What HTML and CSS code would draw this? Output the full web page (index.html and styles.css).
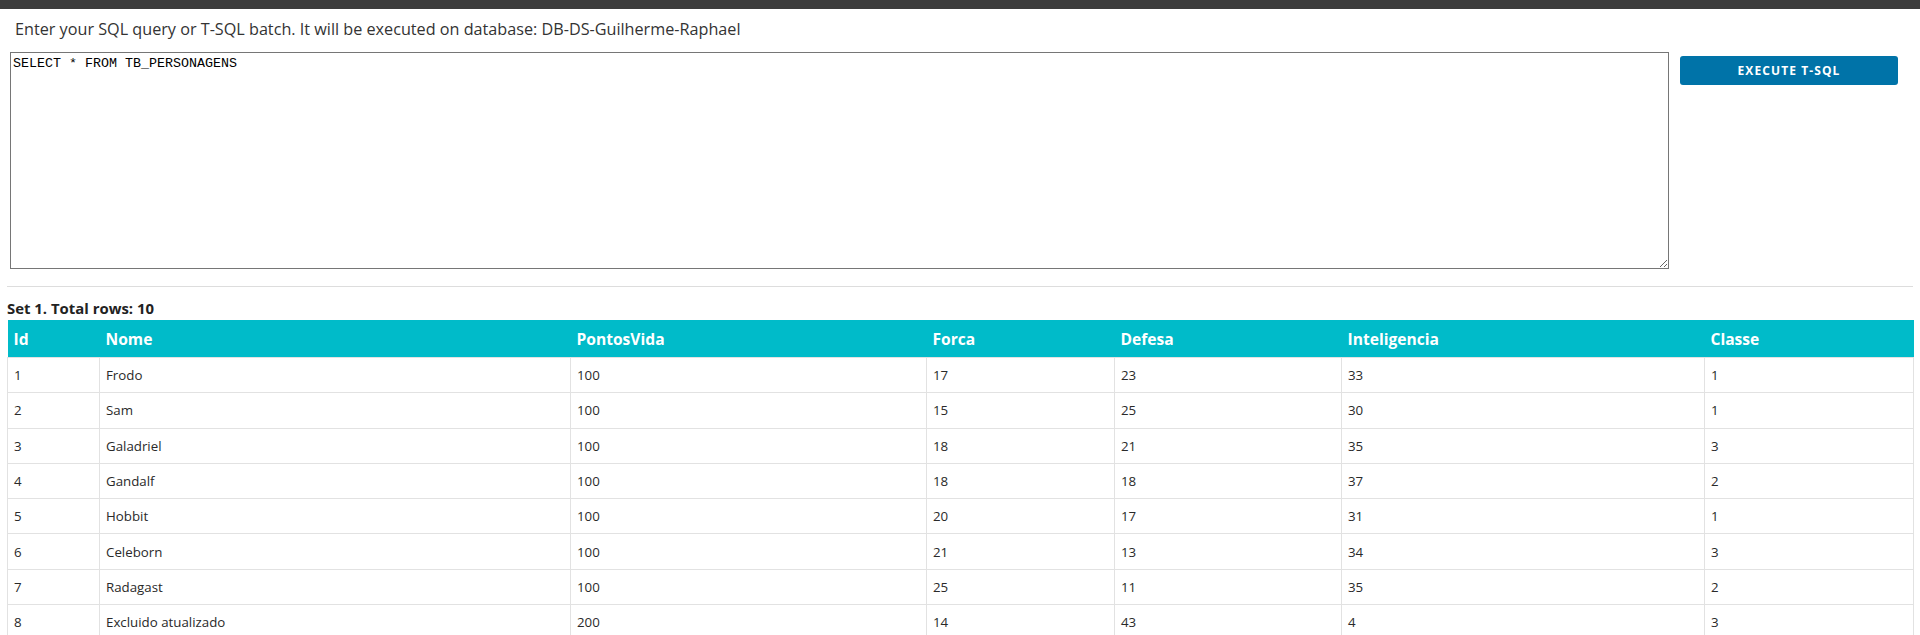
FILE: index.html
```html
<!DOCTYPE html>
<html lang="en">
<head>
<meta charset="utf-8">
<title>Query</title>
<link rel="stylesheet" href="styles.css">
</head>
<body>
<div class="topbar"></div>
<main class="page">
  <p class="intro">Enter your SQL query or T-SQL batch. It will be executed on database: DB-DS-Guilherme-Raphael</p>
  <div class="editor">
    <textarea class="query" spellcheck="false">SELECT * FROM TB_PERSONAGENS</textarea>
    <button class="exec" type="button">Execute T-SQL</button>
  </div>
  <hr class="sep">
  <section class="results">
    <div class="set-title">Set 1. Total rows: 10</div>
    <table class="grid">
      <colgroup>
        <col class="c-id"><col class="c-nome"><col class="c-pv"><col class="c-forca"><col class="c-def"><col class="c-int"><col class="c-classe">
      </colgroup>
      <thead>
        <tr><th>Id</th><th>Nome</th><th>PontosVida</th><th>Forca</th><th>Defesa</th><th>Inteligencia</th><th>Classe</th></tr>
      </thead>
      <tbody>
        <tr><td>1</td><td>Frodo</td><td>100</td><td>17</td><td>23</td><td>33</td><td>1</td></tr>
        <tr><td>2</td><td>Sam</td><td>100</td><td>15</td><td>25</td><td>30</td><td>1</td></tr>
        <tr><td>3</td><td>Galadriel</td><td>100</td><td>18</td><td>21</td><td>35</td><td>3</td></tr>
        <tr><td>4</td><td>Gandalf</td><td>100</td><td>18</td><td>18</td><td>37</td><td>2</td></tr>
        <tr><td>5</td><td>Hobbit</td><td>100</td><td>20</td><td>17</td><td>31</td><td>1</td></tr>
        <tr><td>6</td><td>Celeborn</td><td>100</td><td>21</td><td>13</td><td>34</td><td>3</td></tr>
        <tr><td>7</td><td>Radagast</td><td>100</td><td>25</td><td>11</td><td>35</td><td>2</td></tr>
        <tr><td>8</td><td>Excluido atualizado</td><td>200</td><td>14</td><td>43</td><td>4</td><td>3</td></tr>
      </tbody>
    </table>
  </section>
</main>
</body>
</html>
```

FILE: styles.css
```css
html, body {
  margin: 0;
  padding: 0;
  background: #ffffff;
}

body {
  font-family: "Open Sans", "Noto Sans", "Liberation Sans", sans-serif;
  color: #333333;
}

.topbar {
  height: 9px;
  background: #3c3c3c;
}

.page {
  padding: 0 7px;
}

.intro {
  margin: 8px 0 0 8px;
  font-size: 16.2px;
  line-height: 24px;
  color: #333333;
}

.editor {
  display: flex;
  align-items: flex-start;
  gap: 11px;
  margin: 11px 0 0 3px;
}

.query {
  box-sizing: border-box;
  width: 1659px;
  height: 217px;
  margin: 0;
  padding: 3px 2px;
  border: 1px solid #767676;
  border-radius: 0;
  font-family: "Liberation Mono", "DejaVu Sans Mono", monospace;
  font-size: 13.33px;
  line-height: 16px;
  color: #000000;
  resize: both;
  outline: none;
}

.exec {
  box-sizing: border-box;
  width: 218px;
  height: 29px;
  margin-top: 4px;
  border: 0;
  border-radius: 3px;
  background: #0073a8;
  color: #ffffff;
  font-family: "Open Sans", "Noto Sans", sans-serif;
  font-size: 12px;
  font-weight: 700;
  letter-spacing: 1.1px;
  text-transform: uppercase;
  cursor: pointer;
}

.sep {
  margin: 17px 0 0 0;
  border: 0;
  border-top: 1px solid #dddddd;
  height: 0;
}

.set-title {
  margin-top: 12px;
  font-size: 14.9px;
  font-weight: 700;
  line-height: 19px;
  color: #222222;
}

.grid {
  margin-top: 2px;
  width: 1906px;
  table-layout: fixed;
  border-collapse: collapse;
}

.c-id { width: 92px; }
.c-nome { width: 471px; }
.c-pv { width: 356px; }
.c-forca { width: 188px; }
.c-def { width: 227px; }
.c-int { width: 363px; }
.c-classe { width: 209px; }

.grid th {
  height: 37px;
  padding: 0 6px;
  background: #00bbc9;
  color: #ffffff;
  font-size: 15.6px;
  font-weight: 700;
  text-align: left;
  vertical-align: middle;
  border: 0;
}

.grid td {
  height: 34.3px;
  padding: 0 6px;
  border: 1px solid #e2e2e2;
  font-size: 13.3px;
  color: #2a2a2a;
  text-align: left;
  vertical-align: middle;
}
```
